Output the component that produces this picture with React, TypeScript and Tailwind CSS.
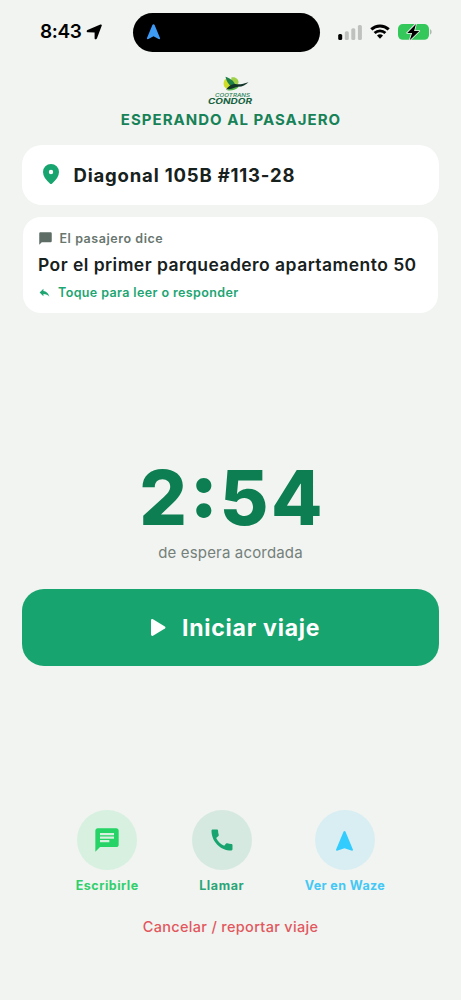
import type { ReactNode } from "react";
import { MdCall, MdChat, MdChatBubble, MdReply } from "react-icons/md";

interface Action {
  label: string;
  icon: ReactNode;
  circle: string;
  text: string;
}

function StatusBar() {
  return (
    <header className="flex h-16 shrink-0 items-center">
      <div className="ml-10 flex w-[93px] items-center gap-1">
        <span className="pt-px text-[19px] font-semibold tracking-[-0.35px] text-black">
          8:43
        </span>
        <svg viewBox="0 0 16 16" className="h-4 w-4">
          <path d="M14.400.6c1-.5 1.700.3 1.300 1.200L10.900 14.600c-.5 1.200-2.300 1-2.300-.4V8.600L2 8.300C.5 8.200.2 6.700 1.500 6.100L14.400.6Z" />
        </svg>
      </div>
      <div className="flex h-[39px] w-[187px] items-center rounded-full bg-black pl-[13px]">
        <svg viewBox="0 0 15 16" className="h-4 w-[15px]" fill="#3d9bf5">
          <path d="M6.400.9c.4-1 1.800-1 2.200 0l5.400 13c.4 1-.5 1.700-1.400 1.200L7.500 12.200l-5.100 2.900c-.9.500-1.800-.2-1.400-1.200L6.400.9Z" />
        </svg>
      </div>
      <svg viewBox="0 0 24 15" className="ml-[18px] h-[15px] w-6">
        <rect x=".2" y="9" width="4" height="6" rx="1.500" />
        <g fill="#bfc1bf">
          <rect x="6.800" y="6.200" width="4" height="8.800" rx="1.500" />
          <rect x="13.300" y="3.200" width="4" height="11.800" rx="1.500" />
          <rect x="19.900" y="0" width="4" height="15" rx="1.500" />
        </g>
      </svg>
      <svg viewBox="0 0 20 15" className="mb-px ml-2 h-[15px] w-5" fill="none">
        <path d="M1.300 5.400a12.500 12.500 0 0 1 17.400 0" stroke="#000" strokeWidth="3" />
        <path d="M4.600 9a7.800 7.800 0 0 1 10.800 0" stroke="#000" strokeWidth="2.800" />
        <path d="M7 11.600a4.300 4.300 0 0 1 6 0l-3 3.200Z" fill="#000" />
      </svg>
      <svg viewBox="0 0 34 18" className="mb-px ml-2 h-[18px] w-[34px]">
        <rect x="0" y="1" width="31" height="15.800" rx="4.800" fill="#34c759" />
        <path d="M32 6.300c2.200.6 2.200 4.600 0 5.200Z" fill="#b4b8b4" />
        <path
          d="M18 .9 9.200 9.900h4.900l-2.400 7.400L21.300 8h-5.200L18 .9Z"
          fill="#000"
          stroke="#f1f4f1"
          strokeWidth="1.600"
          strokeLinejoin="round"
          paintOrder="stroke"
        />
      </svg>
    </header>
  );
}

function CondorLogo() {
  return (
    <svg viewBox="0 0 46 29" className="mr-px h-[29px] w-[46px]">
      <path d="M18.300 3c-2.500 3-2.300 7.500 1.200 9.800l5.500 1L24 6Z" fill="#cfdc28" />
      <path d="M24.500 1.300c4.500-.8 7.300 2 7 5.400l-3 6.300-5-4Z" fill="#9fd048" />
      <path d="M18.500.8c4 1.400 8.200 3.800 9.500 7.500l-3 3c-3-2.200-5.800-6-6.500-10.500Z" fill="#1d8047" />
      <path d="M20 14.300c4 .6 8 .2 11.500-3l-5-1.500Z" fill="#55b34a" />
      <path
        d="M19 13.500c3-3.800 6-6 9.500-5.500 4.500 1 8-.5 13-1.800-2.800 2.600-6 4.500-10 4.600-4 .2-7 3-12.500 2.700Z"
        fill="#12352a"
      />
      <text
        x="8"
        y="20.800"
        textLength="35"
        lengthAdjust="spacingAndGlyphs"
        fontSize="4.800"
        fontWeight="500"
        fontStyle="italic"
        fontFamily="Inter, sans-serif"
        fill="#2f8257"
      >
        COOTRANS
      </text>
      <text
        x="1"
        y="28"
        textLength="44"
        lengthAdjust="spacingAndGlyphs"
        fontSize="7"
        fontWeight="700"
        fontStyle="italic"
        fontFamily="Inter, sans-serif"
        fill="#17613f"
      >
        CONDOR
      </text>
    </svg>
  );
}

const actions: Action[] = [
  {
    label: "Escribirle",
    icon: <MdChat className="size-7" />,
    circle: "bg-[#d7f0df] text-[#25d366]",
    text: "text-[#32cf6e] tracking-[0.500px]",
  },
  {
    label: "Llamar",
    icon: <MdCall className="size-7" />,
    circle: "bg-[#d6e9e0] text-[#18a46f]",
    text: "text-[#2aa578] tracking-[0.600px]",
  },
  {
    label: "Ver en Waze",
    icon: (
      <svg viewBox="0 0 17 20" className="mt-px h-5 w-[17px]" fill="currentColor">
        <path d="M7.600.6c.4-.8 1.400-.8 1.800 0L16.900 18.500c.2.800-.2 1.300-.9 1.200L8.500 17.200 1 19.700c-.7.1-1.100-.4-.9-1.200L7.600.6Z" />
      </svg>
    ),
    circle: "bg-[#d9eef2] text-[#33ccff]",
    text: "text-[#45c8f5] tracking-[0.400px]",
  },
];

export default function App() {
  return (
    <div className="flex h-[1000px] w-[461px] flex-col overflow-hidden bg-[#f1f4f1] font-['Inter',sans-serif]">
      <StatusBar />

      <main className="flex flex-1 flex-col px-[22px]">
        <div className="mt-3 flex flex-col items-center">
          <CondorLogo />
          <h1 className="mt-1.5 pl-px text-[15px] leading-[18px] font-bold tracking-[1.020px] whitespace-nowrap text-[#178257]">
            ESPERANDO AL PASAJERO
          </h1>
        </div>

        <section className="mt-4 flex h-[60px] items-center rounded-[20px] bg-white pl-[20.500px]">
          <svg viewBox="0 0 16 20" className="mb-0.5 h-5 w-4" fill="#18a46f">
            <path
              fillRule="evenodd"
              d="M8 0a8 8 0 0 0-8 8c0 4 2.700 8 7.100 11.700.5.400 1.300.4 1.800 0C13.300 16 16 12 16 8a8 8 0 0 0-8-8Zm0 10.200a2.200 2.200 0 1 1 0-4.400 2.200 2.200 0 0 1 0 4.400Z"
            />
          </svg>
          <span className="ml-[15px] pt-px text-[18.500px] font-bold tracking-[0.820px] whitespace-nowrap text-[#17211d]">
            Diagonal 105B #113-28
          </span>
        </section>

        <section className="mx-px mt-3 flex h-24 flex-col rounded-[18px] bg-white px-[15px] pt-[13px]">
          <div className="flex h-4 items-center text-[#5d6d66]">
            <MdChatBubble className="size-[15px]" />
            <span className="ml-[6.500px] pt-0.5 text-[12.500px] font-semibold tracking-[0.550px] text-[#68766f]">
              El pasajero dice
            </span>
          </div>
          <p className="mt-[7px] text-[17.500px] leading-[23px] font-semibold tracking-[0.450px] whitespace-nowrap text-[#17211d]">
            Por el primer parqueadero apartamento 50
          </p>
          <div className="mt-2 flex h-4 items-center text-[#1da572]">
            <MdReply className="size-[13px]" />
            <span className="ml-[7px] pt-0.5 text-[12.500px] font-semibold tracking-[0.380px]">
              Toque para leer o responder
            </span>
          </div>
        </section>

        <div className="mt-[140px] flex h-[136px] flex-col items-center">
          <div className="flex h-[90px] pl-[3px] text-[75px] leading-[90px] font-extrabold tracking-[4px] tabular-nums text-[#0d7e52]">
            <span>2</span>
            <span className="mx-[2.500px] -translate-y-2 font-black">:</span>
            <span>54</span>
          </div>
          <p className="text-[15px] leading-5 tracking-[0.160px] text-[#75807b]">
            de espera acordada
          </p>
        </div>

        <button className="flex h-[77px] shrink-0 items-center rounded-[22px] bg-[#18a46f] pl-[129px] text-white">
          <svg viewBox="0 0 15 17" className="h-[17px] w-[15px]" fill="currentColor">
            <path d="M0 1.400C0 .2 1.100-.3 2 .2l11.900 7.400c.7.500.7 1.300 0 1.800L2 16.800c-.9.5-2 0-2-1.200Z" />
          </svg>
          <span className="ml-4 pt-px text-[23px] font-bold tracking-[0.770px] whitespace-nowrap">
            Iniciar viaje
          </span>
        </button>

        <div className="mt-36 flex justify-center">
          {actions.map((action) => (
            <button
              key={action.label}
              className="flex flex-col items-center px-[26.500px]"
            >
              <span
                className={`flex size-[60px] items-center justify-center rounded-full ${action.circle}`}
              >
                {action.icon}
              </span>
              <span
                className={`mt-2 text-[12.500px] leading-4 font-bold whitespace-nowrap ${action.text}`}
              >
                {action.label}
              </span>
            </button>
          ))}
        </div>

        <button className="mt-[23px] text-center text-[14.500px] leading-5 font-medium tracking-[0.320px] text-[#e2575d]">
          Cancelar / reportar viaje
        </button>
      </main>
    </div>
  );
}
